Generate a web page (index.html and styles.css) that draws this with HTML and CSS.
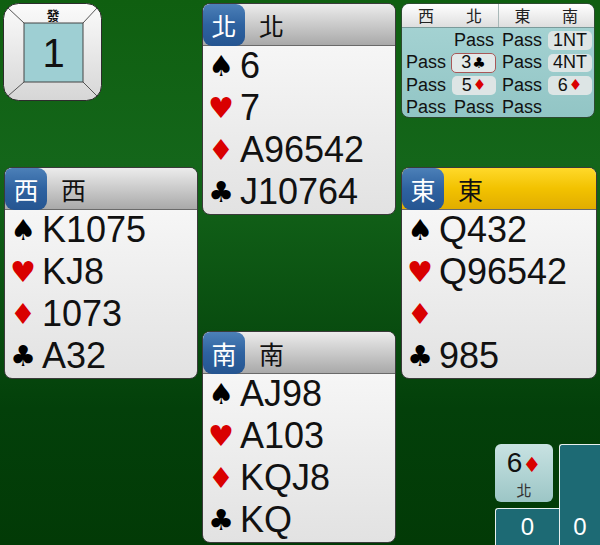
FILE: index.html
```html
<!DOCTYPE html>
<html>
<head>
    <title>橋牌 - 牌局</title>
<link rel="stylesheet" href="styles.css">
</head>
<body>
    <div class="table">
        <div class="board">
            <svg width="99" height="98" viewBox="0 0 99 98">
                <defs>
                    <linearGradient id="frame" x1="0" y1="0" x2="0" y2="1">
                        <stop offset="0" stop-color="#fbfbfb"/>
                        <stop offset="1" stop-color="#d6d6d6"/>
                    </linearGradient>
                </defs>
                <rect x="0.5" y="0.5" width="98" height="97" rx="15" fill="url(#frame)" stroke="#2c2c2c"/>
                <line x1="5" y1="5" x2="21" y2="20" stroke="#555"/>
                <line x1="94" y1="5" x2="80" y2="20" stroke="#555"/>
                <line x1="5" y1="93" x2="21" y2="79" stroke="#555"/>
                <line x1="94" y1="93" x2="80" y2="79" stroke="#555"/>
                <rect x="21" y="20" width="59" height="59" fill="#9ecfd3" stroke="#444"/>
                <text x="50" y="17" class="board-vul">發</text>
                <text x="50.5" y="64" class="board-num">1</text>
            </svg>
        </div>

        <div class="hand north">
            <div class="hand-head">
                <span class="seat">北</span>
                <span class="name">北</span>
            </div>
            <div class="suit"><span class="sym">♠</span>6</div>
            <div class="suit"><span class="sym red">♥</span>7</div>
            <div class="suit"><span class="sym red">♦</span>A96542</div>
            <div class="suit"><span class="sym">♣</span>J10764</div>
        </div>

        <div class="bidding">
            <div class="bid-head">
                <span>西</span><span>北</span><span class="split">東</span><span>南</span>
            </div>
            <div class="bid-grid">
                <span></span>
                <span>Pass</span>
                <span>Pass</span>
                <span class="call">1NT</span>

                <span>Pass</span>
                <span class="call alert">3<i class="blk">♣</i></span>
                <span>Pass</span>
                <span class="call">4NT</span>

                <span>Pass</span>
                <span class="call">5<i class="red">♦</i></span>
                <span>Pass</span>
                <span class="call">6<i class="red">♦</i></span>

                <span>Pass</span>
                <span>Pass</span>
                <span>Pass</span>
                <span></span>
            </div>
        </div>

        <div class="hand west">
            <div class="hand-head">
                <span class="seat">西</span>
                <span class="name">西</span>
            </div>
            <div class="suit"><span class="sym">♠</span>K1075</div>
            <div class="suit"><span class="sym red">♥</span>KJ8</div>
            <div class="suit"><span class="sym red">♦</span>1073</div>
            <div class="suit"><span class="sym">♣</span>A32</div>
        </div>

        <div class="hand east">
            <div class="hand-head active">
                <span class="seat">東</span>
                <span class="name">東</span>
            </div>
            <div class="suit"><span class="sym">♠</span>Q432</div>
            <div class="suit"><span class="sym red">♥</span>Q96542</div>
            <div class="suit"><span class="sym red">♦</span></div>
            <div class="suit"><span class="sym">♣</span>985</div>
        </div>

        <div class="hand south">
            <div class="hand-head">
                <span class="seat">南</span>
                <span class="name">南</span>
            </div>
            <div class="suit"><span class="sym">♠</span>AJ98</div>
            <div class="suit"><span class="sym red">♥</span>A103</div>
            <div class="suit"><span class="sym red">♦</span>KQJ8</div>
            <div class="suit"><span class="sym">♣</span>KQ</div>
        </div>

        <div class="score">
            <div class="score-left">
                <div class="contract">
                    <div class="contract-bid">6<i class="red">♦</i></div>
                    <div class="contract-by">北</div>
                </div>
                <div class="tricks">0</div>
            </div>
            <div class="tricks tall">0</div>
        </div>
    </div>
</body>
</html>
```

FILE: styles.css
```css
body {
    margin: 0;
    padding: 0;
    width: 600px;
    height: 545px;
    overflow: hidden;
    font-family: "Liberation Sans", Arial, "Noto Sans CJK TC", sans-serif;
    background: linear-gradient(#0f5f10, #14661a 30%, #03400a 75%, #023a06);
}

.table {
    display: grid;
    grid-template-columns: 193px 194px 199px;
    grid-template-rows: 116px 48px 47px 117px 47px 167px;
    column-gap: 5px;
    padding: 3px 0 0 4px;
}

/* board number */
.board {
    grid-column: 1;
    grid-row: 1 / 3;
    margin-left: -1px;
}

.board svg {
    display: block;
}

.board-vul {
    font-family: "Noto Sans CJK TC", sans-serif;
    font-size: 13px;
    font-weight: bold;
    text-anchor: middle;
    fill: #111;
}

.board-num {
    font-family: "Liberation Sans", Arial, sans-serif;
    font-size: 40px;
    text-anchor: middle;
    fill: #111;
}

/* hands */
.hand {
    width: 192px;
    align-self: start;
    border: 1px solid #3a3a3a;
    border-radius: 8px;
    overflow: hidden;
    background: linear-gradient(#fbfbfb, #e2e2e2);
}

.north { grid-column: 2; grid-row: 1 / 4; }
.west  { grid-column: 1; grid-row: 3 / 6; }
.east  { grid-column: 3; grid-row: 3 / 6; width: 194px; }
.south { grid-column: 2; grid-row: 5 / 7; }

.hand-head {
    display: flex;
    align-items: center;
    height: 42px;
    background: linear-gradient(#ececec, #a9a9a9);
    border-bottom: 1px solid #6a6a6a;
    box-sizing: border-box;
}

.hand-head.active {
    background: linear-gradient(#ffd92a, #f2c200 50%, #e1ad00);
}

.seat {
    width: 42px;
    height: 42px;
    display: flex;
    align-items: center;
    justify-content: center;
    border-radius: 0 9px 9px 9px;
    background: linear-gradient(#4c80b8, #2e62a0 50%, #255591);
    color: #fff;
    font-family: "Noto Sans CJK TC", sans-serif;
    font-size: 25px;
}

.name {
    margin-left: 14px;
    font-family: "Noto Sans CJK TC", sans-serif;
    font-size: 25px;
    color: #111;
}

.suit {
    height: 42px;
    line-height: 40px;
    font-size: 36px;
    color: #111;
    white-space: nowrap;
}

.sym {
    display: inline-block;
    width: 36px;
    margin-right: 1px;
    text-align: center;
    font-family: "DejaVu Sans", sans-serif;
    font-size: 29px;
    vertical-align: top;
    color: #000;
}

.red {
    color: #d90000;
}

.blk {
    color: #000;
}

i {
    font-style: normal;
    font-family: "DejaVu Sans", sans-serif;
}

/* auction */
.bidding {
    grid-column: 3;
    grid-row: 1;
    width: 194px;
    height: 115px;
    box-sizing: border-box;
    border: 1px solid #2d4a30;
    border-radius: 8px;
    overflow: hidden;
    background: linear-gradient(#a8d5d5, #92c5c5);
}

.bid-head {
    display: grid;
    grid-template-columns: repeat(4, 48px);
    height: 23px;
    line-height: 23px;
    text-align: center;
    font-family: "Noto Sans CJK TC", sans-serif;
    font-size: 16px;
    color: #222;
    background: linear-gradient(#ffffff, #dedede);
    border-bottom: 1px solid #7a9a9a;
}

.bid-head .split {
    border-left: 1px solid #a8b8b8;
}

.bid-grid {
    display: grid;
    grid-template-columns: repeat(4, 48px);
    grid-auto-rows: 22.5px;
    padding-top: 1px;
    font-size: 18px;
    color: #111;
}

.bid-grid span {
    display: flex;
    align-items: center;
    justify-content: center;
}

.bid-grid .call {
    margin: 2px 2px;
    border-radius: 5px;
    background: #dde5e5;
}

.bid-grid .call i {
    font-size: 15px;
    margin-left: 1px;
}

.bid-grid .alert {
    border: 1px solid #a85858;
    background: #e3e9e9;
    margin: 1px 2px 1px 1px;
}

/* contract and tricks */
.score {
    grid-column: 3;
    grid-row: 6;
    align-self: end;
    justify-self: end;
    display: flex;
    align-items: stretch;
    height: 101px;
}

.score-left {
    display: flex;
    flex-direction: column;
    justify-content: space-between;
    width: 64px;
}

.contract {
    width: 58px;
    height: 58px;
    border-radius: 6px;
    background: linear-gradient(#c8e2e2, #9cc6c6);
    text-align: center;
}

.contract-bid {
    font-size: 28px;
    line-height: 30px;
    padding-top: 4px;
    color: #111;
}

.contract-bid i {
    font-size: 21px;
}

.contract-by {
    font-family: "Noto Sans CJK TC", sans-serif;
    font-size: 15px;
    line-height: 20px;
    color: #333;
}

.tricks {
    height: 37px;
    box-sizing: border-box;
    border-top: 1px solid #e8f0f0;
    border-left: 1px solid #e8f0f0;
    border-radius: 3px 0 0 0;
    background: #1d6a74;
    color: #fff;
    font-size: 24px;
    line-height: 36px;
    text-align: center;
}

.tricks.tall {
    width: 41px;
    height: 101px;
    padding-top: 64px;
}
```
